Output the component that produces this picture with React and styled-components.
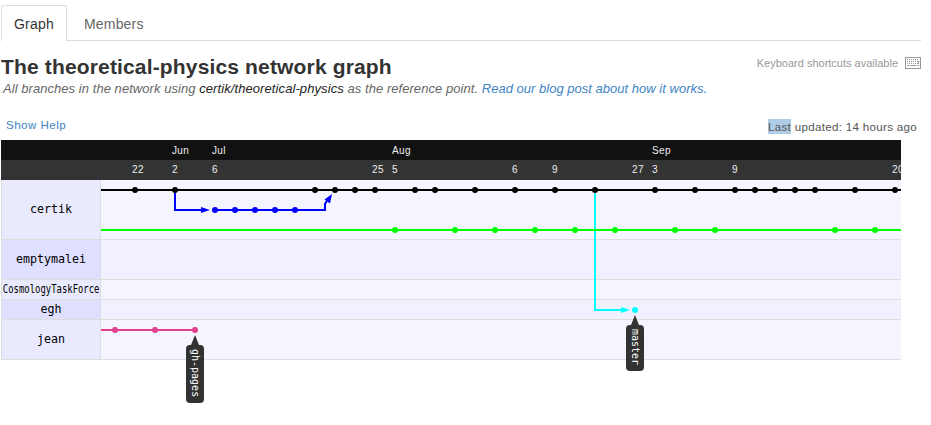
import React from 'react';
import styled, { createGlobalStyle } from 'styled-components';

const GlobalStyle = createGlobalStyle`
  *, *::before, *::after { box-sizing: border-box; }
  body {
    margin: 0;
    background: #fff;
    color: #333;
    font-family: "Liberation Sans", Arial, sans-serif;
    overflow: hidden;
  }
`;

const Page = styled.main`
  width: 920px;
  height: 425px;
  margin-left: 1px;
  padding-top: 5px;
`;

const Tabs = styled.nav`
  display: flex;
  height: 36px;
  border-bottom: 1px solid #ddd;
`;

const Tab = styled.a`
  height: ${(p) => (p.$active ? '36px' : '35px')};
  padding: 0 ${(p) => (p.$active ? '12px' : '17px')};
  border: ${(p) => (p.$active ? '1px solid #ddd' : '0')};
  border-bottom: 0;
  border-radius: 3px 3px 0 0;
  background: #fff;
  color: ${(p) => (p.$active ? '#333' : '#666')};
  font-size: 14px;
  letter-spacing: 0.2px;
  line-height: ${(p) => (p.$active ? '36px' : '38px')};
`;

const Heading = styled.header`
  display: flex;
  justify-content: space-between;
  height: 38px;
  padding-top: 13px;
`;

const Title = styled.h1`
  margin: 0;
  font-size: 21px;
  letter-spacing: 0.155px;
  line-height: 26px;
  white-space: nowrap;
`;

const Shortcuts = styled.div`
  display: flex;
  gap: 7px;
  height: 18px;
  color: #999;
  font-size: 11px;
  line-height: 19px;

  svg { margin-top: 3px; }
`;

const Description = styled.p`
  height: 20px;
  margin: 0 0 0 2px;
  color: #666;
  font-size: 13px;
  font-style: italic;
  letter-spacing: 0.052px;
  line-height: 20px;
  white-space: nowrap;

  strong { color: #222; font-weight: 400; letter-spacing: 0.09px; }
  a { color: #4183c4; letter-spacing: 0.02px; }
`;

const InfoBar = styled.div`
  display: flex;
  justify-content: space-between;
  height: 41px;
  padding: 18px 4px 0 5px;
  font-size: 11.6px;
  letter-spacing: 0.3px;
  line-height: 15px;
`;

const HelpLink = styled.a`
  color: #4183c4;
  letter-spacing: 0.45px;
`;

const Updated = styled.span`
  margin-top: 2px;
  color: #555;
  line-height: 15px;

  mark {
    display: inline-block;
    height: 15px;
    background: #b0cde8;
    color: #555;
    vertical-align: top;
  }
`;

const Network = styled.section`
  position: relative;
  width: 900px;
`;

const Axis = styled.div`
  display: grid;
  grid-template-columns: repeat(45, 20px);
  height: 20px;
  padding-left: 11px;
  overflow: hidden;
  background: ${(p) => (p.$dark ? '#111' : '#333')};
  color: #eee;
  font-size: 10px;
  letter-spacing: 0.35px;
  line-height: ${(p) => (p.$dark ? '22px' : '20px')};
`;

const Tick = styled.span`
  grid-row: 1;
  grid-column-start: ${(p) => p.$col};
  width: 20px;
  white-space: nowrap;
`;

const Lane = styled.div`
  display: flex;
  height: ${(p) => p.$height}px;
  border-left: 1px solid #ddd;
  border-bottom: 1px solid #ddd;
  background: ${(p) => (p.$alt ? '#f0f0ff' : '#f5f5ff')};
`;

const Owner = styled.div`
  display: flex;
  align-items: center;
  justify-content: center;
  width: 99px;
  padding-bottom: 2px;
  border-right: 1px solid #ddd;
  background: ${(p) => (p.$alt ? '#dfdfff' : '#eaeaff')};
  color: #000;
  font: 11.67px/16px "DejaVu Sans Mono", monospace;

  span { transform: ${(p) => (p.$squeeze ? `scaleX(${p.$squeeze})` : 'none')}; }
`;

const Graph = styled.svg`
  position: absolute;
  left: 100px;
  top: 40px;
`;

const BranchTag = styled.div`
  position: absolute;
  left: ${(p) => p.$x}px;
  top: ${(p) => p.$y}px;
  width: 18px;
  height: ${(p) => p.$height}px;
  padding: 13.5px 0.5px 0 0;
  color: #fff;
  font: 10px/17px "DejaVu Sans Mono", monospace;
  writing-mode: vertical-rl;

  svg { position: absolute; inset: 0; }
  span { position: relative; }
`;

const months = [[9, 'Jun'], [11, 'Jul'], [20, 'Aug'], [33, 'Sep']];
const days = [[7, '22'], [9, '2'], [11, '6'], [19, '25'], [20, '5'], [26, '6'], [28, '9'], [32, '27'], [33, '3'], [37, '9'], [45, '20']];

const lanes = [
  { name: 'certik', height: 60 },
  { name: 'emptymalei', height: 40 },
  { name: 'CosmologyTaskForce', height: 20, squeeze: 0.765 },
  { name: 'egh', height: 20 },
  { name: 'jean', height: 40 },
];

const commits = [
  { color: '#000', y: 190, xs: [135, 175, 315, 335, 355, 375, 415, 435, 475, 515, 555, 595, 655, 695, 735, 755, 775, 795, 815, 855, 895] },
  { color: '#0f0', y: 230, xs: [395, 455, 495, 535, 575, 615, 675, 715, 835, 875] },
  { color: '#00f', y: 210, xs: [215, 235, 255, 275, 295] },
  { color: '#0ff', y: 310, xs: [635] },
  { color: '#e0408d', y: 330, xs: [115, 155, 195] },
];

const KeyboardIcon = () => (
  <svg width="16" height="12" viewBox="0 0 16 12" fill="none" shapeRendering="crispEdges">
    <rect x=".5" y=".5" width="15" height="11" stroke="#999" />
    <path d="M2 2.500H14M2 4.500H14M2 6.500H14" stroke="#999" strokeDasharray="1 1" />
    <path d="M2 8.500H4M5 8.500H11M12 8.500H14M13.500 4V7" stroke="#999" />
  </svg>
);

const Tag = ({ x, y, height, children }) => (
  <BranchTag $x={x} $y={y} $height={height}>
    <svg width="18" height={height}>
      <path
        fill="#222"
        fillOpacity=".93"
        d={`M9 0L13 10H14Q18 10 18 14V${height - 4}Q18 ${height} 14 ${height}H4Q0 ${height} 0 ${height - 4}V14Q0 10 4 10H5Z`}
      />
    </svg>
    <span>{children}</span>
  </BranchTag>
);

export default function App() {
  return (
    <>
      <GlobalStyle />
      <Page>
        <Tabs>
          <Tab $active>Graph</Tab>
          <Tab>Members</Tab>
        </Tabs>
        <Heading>
          <Title>The theoretical-physics network graph</Title>
          <Shortcuts>Keyboard shortcuts available <KeyboardIcon /></Shortcuts>
        </Heading>
        <Description>
          All branches in the network using <strong>certik/theoretical-physics</strong> as the reference point. <a>Read our blog post about how it works.</a>
        </Description>
        <InfoBar>
          <HelpLink>Show Help</HelpLink>
          <Updated><mark>Last</mark> updated: 14 hours ago</Updated>
        </InfoBar>
        <Network>
          <Axis $dark>{months.map(([c, t]) => <Tick key={c} $col={c}>{t}</Tick>)}</Axis>
          <Axis>{days.map(([c, t]) => <Tick key={c} $col={c}>{t}</Tick>)}</Axis>
          {lanes.map((l, i) => (
            <Lane key={l.name} $height={l.height} $alt={i % 2 === 1}>
              <Owner $alt={i % 2 === 1} $squeeze={l.squeeze}><span>{l.name}</span></Owner>
            </Lane>
          ))}
          <Graph width="800" height="180" viewBox="101 180 800 180" fill="none" strokeWidth="2">
            <path d="M595 190V310H624" stroke="#0ff" />
            <path d="M621 307L630 310L621 313Z" fill="#0ff" />
            <path d="M175 190V210H204M215 210H325V204L328 199" stroke="#00f" />
            <path d="M201 207L210 210L201 213ZM332 194L330 203.500L324.500 199.500Z" fill="#00f" />
            <path d="M101 190H901" stroke="#000" />
            <path d="M101 230H901" stroke="#0f0" />
            <path d="M101 330H195" stroke="#e0408d" />
            {commits.map((b) => b.xs.map((x) => <circle key={`${b.y}-${x}`} cx={x} cy={b.y} r="3" fill={b.color} />))}
          </Graph>
          <Tag x={185} y={195} height={68}>gh-pages</Tag>
          <Tag x={625} y={175} height={56}>master</Tag>
        </Network>
      </Page>
    </>
  );
}
